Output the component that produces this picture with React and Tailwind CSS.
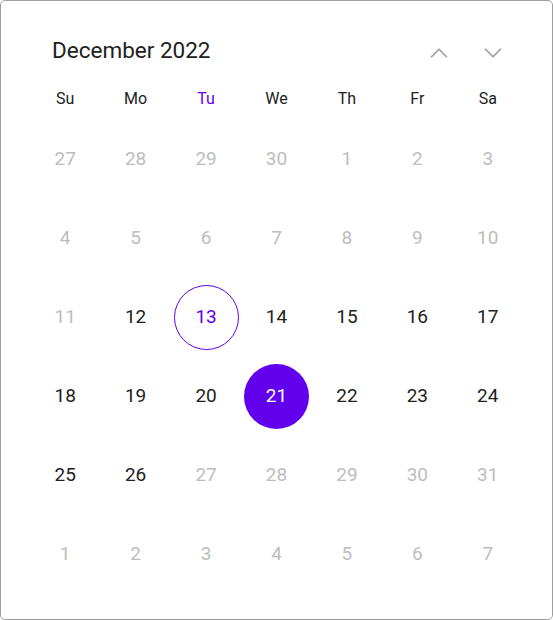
import { ChevronUp, ChevronDown } from 'lucide-react';

const weekdays = ['Su', 'Mo', 'Tu', 'We', 'Th', 'Fr', 'Sa'];

// six weeks shown for December 2022, with muted days outside the pickable range
const weeks = [
  [27, 28, 29, 30, 1, 2, 3],
  [4, 5, 6, 7, 8, 9, 10],
  [11, 12, 13, 14, 15, 16, 17],
  [18, 19, 20, 21, 22, 23, 24],
  [25, 26, 27, 28, 29, 30, 31],
  [1, 2, 3, 4, 5, 6, 7],
];

function isMuted(w, d) {
  if (w === 0 || w === 1 || w === 5) return true;
  if (w === 2 && d === 0) return true;
  if (w === 4 && d >= 2) return true;
  return false;
}

function Day({ value, muted, today, selected }) {
  let cls = 'text-[#212121]';
  if (muted) cls = 'text-[#bdbdbd]';
  if (today) cls = 'border-[1.5px] border-[#6200ee] text-[#6200ee]';
  if (selected) cls = 'bg-[#6200ee] text-white';
  return (
    <div className="flex h-[79px] items-center justify-center">
      <div className={`flex h-[65px] w-[65px] items-center justify-center rounded-full text-[19px] ${cls}`}>
        {value}
      </div>
    </div>
  );
}

export default function App() {
  return (
    <div className="h-[620px] w-[553px] bg-white font-['Roboto',sans-serif]">
      <div className="flex h-full flex-col rounded-[5px] border border-[#9e9e9e] px-[29px] pt-[30px]">
        <div className="flex h-[40px] items-center">
          <div className="ml-[22px] flex-1 text-[22.5px] text-[#212121]">December 2022</div>
          <div className="mr-[15px] mt-[4px] flex items-center gap-[24px] text-[#9e9e9e]">
            <ChevronUp size={30} strokeWidth={1.4} />
            <ChevronDown size={30} strokeWidth={1.4} />
          </div>
        </div>
        <div className="mt-[8px] grid h-[40px] grid-cols-7 items-center">
          {weekdays.map((d) => (
            <div
              key={d}
              className={`text-center text-[16px] ${d === 'Tu' ? 'text-[#6200ee]' : 'text-[#212121]'}`}
            >
              {d}
            </div>
          ))}
        </div>
        <div className="mt-[1px] grid grid-cols-7">
          {weeks.map((week, w) =>
            week.map((v, d) => (
              <Day
                key={`${w}-${d}`}
                value={v}
                muted={isMuted(w, d)}
                today={w === 2 && d === 2}
                selected={w === 3 && d === 3}
              />
            ))
          )}
        </div>
      </div>
    </div>
  );
}
